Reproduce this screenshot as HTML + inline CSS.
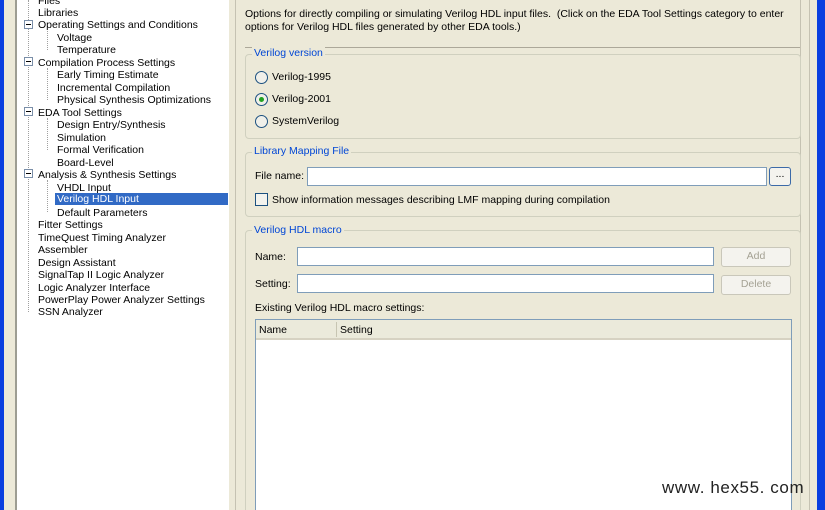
<!DOCTYPE html>
<html><head><meta charset="utf-8"><style>
*{margin:0;padding:0;box-sizing:border-box}
html,body{width:825px;height:510px;overflow:hidden}
body{background:#ece9d8;font-family:"Liberation Sans",sans-serif;font-size:10.5px;color:#000;position:relative}
.a{position:absolute}
.blue{background:#0a3fe0}
.t{position:absolute;white-space:nowrap;line-height:13px}
.gb{position:absolute;border:1px solid #d0d0bf;border-radius:4px}
.gl{position:absolute;background:#ece9d8;color:#0046d5;padding:0 2px;white-space:nowrap;line-height:13px}
.inp{position:absolute;background:#fff;border:1px solid #7f9db9}
.btn{position:absolute;border:1px solid #c9c7ba;border-radius:3px;background:#f4f3ee;color:#a5a294;text-align:center;line-height:17px}
.rad{position:absolute;width:13px;height:13px;border:1px solid #1c5180;border-radius:50%;background:#f0f0ea}
.exp{position:absolute;width:9px;height:9px;border:1px solid #7a8ea8;background:#fff}
.exp:after{content:"";position:absolute;left:1px;top:3px;width:5px;height:1px;background:#000}
.dl{position:absolute;border-left:1px dotted #a0a0a0}
</style></head><body>
<div class="a blue" style="left:0;top:0;width:4px;height:510px"></div>
<div class="a" style="left:15px;top:0;width:2px;height:510px;background:#9d9d92"></div>
<div class="a" style="left:17px;top:0;width:212px;height:510px;background:#fff"></div>
<div class="a" style="left:235px;top:0;width:1px;height:510px;background:#c5c2b2"></div>
<div class="a" style="left:800px;top:0;width:1px;height:510px;background:#c5c2b2"></div>
<div class="a" style="left:809px;top:0;width:1px;height:510px;background:#c5c2b2"></div>
<div class="a blue" style="left:817px;top:0;width:8px;height:510px"></div>

<div class="dl" style="left:28px;top:0;height:312px"></div>
<div class="dl" style="left:47px;top:31px;height:19px"></div>
<div class="dl" style="left:47px;top:68px;height:32px"></div>
<div class="dl" style="left:47px;top:118px;height:32px"></div>
<div class="dl" style="left:47px;top:180px;height:32px"></div>
<div class="exp" style="left:24px;top:20px"></div>
<div class="exp" style="left:24px;top:57px"></div>
<div class="exp" style="left:24px;top:107px"></div>
<div class="exp" style="left:24px;top:169px"></div>
<div class="a" style="left:55px;top:193px;width:173px;height:12px;background:#316ac5"></div>
<div class="t" style="left:38px;top:-5px">Files</div>
<div class="t" style="left:38px;top:7px">Libraries</div>
<div class="t" style="left:38px;top:19px">Operating Settings and Conditions</div>
<div class="t" style="left:57px;top:32px">Voltage</div>
<div class="t" style="left:57px;top:44px">Temperature</div>
<div class="t" style="left:38px;top:57px">Compilation Process Settings</div>
<div class="t" style="left:57px;top:69px">Early Timing Estimate</div>
<div class="t" style="left:57px;top:82px">Incremental Compilation</div>
<div class="t" style="left:57px;top:94px">Physical Synthesis Optimizations</div>
<div class="t" style="left:38px;top:107px">EDA Tool Settings</div>
<div class="t" style="left:57px;top:119px">Design Entry/Synthesis</div>
<div class="t" style="left:57px;top:132px">Simulation</div>
<div class="t" style="left:57px;top:144px">Formal Verification</div>
<div class="t" style="left:57px;top:157px">Board-Level</div>
<div class="t" style="left:38px;top:169px">Analysis &amp; Synthesis Settings</div>
<div class="t" style="left:57px;top:182px">VHDL Input</div>
<div class="t" style="left:57px;top:193px;color:#fff">Verilog HDL Input</div>
<div class="t" style="left:57px;top:207px">Default Parameters</div>
<div class="t" style="left:38px;top:219px">Fitter Settings</div>
<div class="t" style="left:38px;top:232px">TimeQuest Timing Analyzer</div>
<div class="t" style="left:38px;top:244px">Assembler</div>
<div class="t" style="left:38px;top:257px">Design Assistant</div>
<div class="t" style="left:38px;top:269px">SignalTap II Logic Analyzer</div>
<div class="t" style="left:38px;top:282px">Logic Analyzer Interface</div>
<div class="t" style="left:38px;top:294px">PowerPlay Power Analyzer Settings</div>
<div class="t" style="left:38px;top:306px">SSN Analyzer</div>

<div class="t" style="left:245px;top:8px">Options for directly compiling or simulating Verilog HDL input files.&nbsp; (Click on the EDA Tool Settings category to enter</div>
<div class="t" style="left:245px;top:21px">options for Verilog HDL files generated by other EDA tools.)</div>
<div class="a" style="left:245px;top:47px;width:555px;height:1px;background:#aca899"></div>

<div class="gb" style="left:245px;top:54px;width:556px;height:85px"></div>
<div class="gl" style="left:252px;top:47px">Verilog version</div>
<div class="rad" style="left:255px;top:71px"></div>
<div class="t" style="left:272px;top:71px">Verilog-1995</div>
<div class="rad" style="left:255px;top:93px"></div>
<div class="a" style="left:259px;top:97px;width:5px;height:5px;border-radius:50%;background:#21a121"></div>
<div class="t" style="left:272px;top:93px">Verilog-2001</div>
<div class="rad" style="left:255px;top:115px"></div>
<div class="t" style="left:272px;top:115px">SystemVerilog</div>

<div class="gb" style="left:245px;top:152px;width:556px;height:65px"></div>
<div class="gl" style="left:252px;top:145px">Library Mapping File</div>
<div class="t" style="left:255px;top:170px">File name:</div>
<div class="inp" style="left:307px;top:167px;width:460px;height:19px"></div>
<div class="btn" style="left:769px;top:167px;width:22px;height:19px;border-color:#3c6aa8;color:#000;line-height:13px">...</div>
<div class="a" style="left:255px;top:193px;width:13px;height:13px;border:1px solid #1c5180;background:#f3f3ee"></div>
<div class="t" style="left:272px;top:194px">Show information messages describing LMF mapping during compilation</div>

<div class="gb" style="left:245px;top:230px;width:556px;height:290px"></div>
<div class="gl" style="left:252px;top:224px">Verilog HDL macro</div>
<div class="t" style="left:255px;top:251px">Name:</div>
<div class="inp" style="left:297px;top:247px;width:417px;height:19px"></div>
<div class="btn" style="left:721px;top:247px;width:70px;height:20px">Add</div>
<div class="t" style="left:255px;top:278px">Setting:</div>
<div class="inp" style="left:297px;top:274px;width:417px;height:19px"></div>
<div class="btn" style="left:721px;top:275px;width:70px;height:20px">Delete</div>
<div class="t" style="left:255px;top:302px">Existing Verilog HDL macro settings:</div>
<div class="inp" style="left:255px;top:319px;width:537px;height:200px"></div>
<div class="a" style="left:256px;top:320px;width:535px;height:20px;background:#ebeadb;border-bottom:2px solid #d6d2c2"></div>
<div class="a" style="left:336px;top:322px;width:1px;height:15px;background:#c7c5b2"></div>
<div class="t" style="left:259px;top:324px">Name</div>
<div class="t" style="left:340px;top:324px">Setting</div>

<div class="t" style="left:662px;top:478px;font-size:17px;line-height:20px;letter-spacing:0.6px;color:#222">www. hex55. com</div>
</body></html>
